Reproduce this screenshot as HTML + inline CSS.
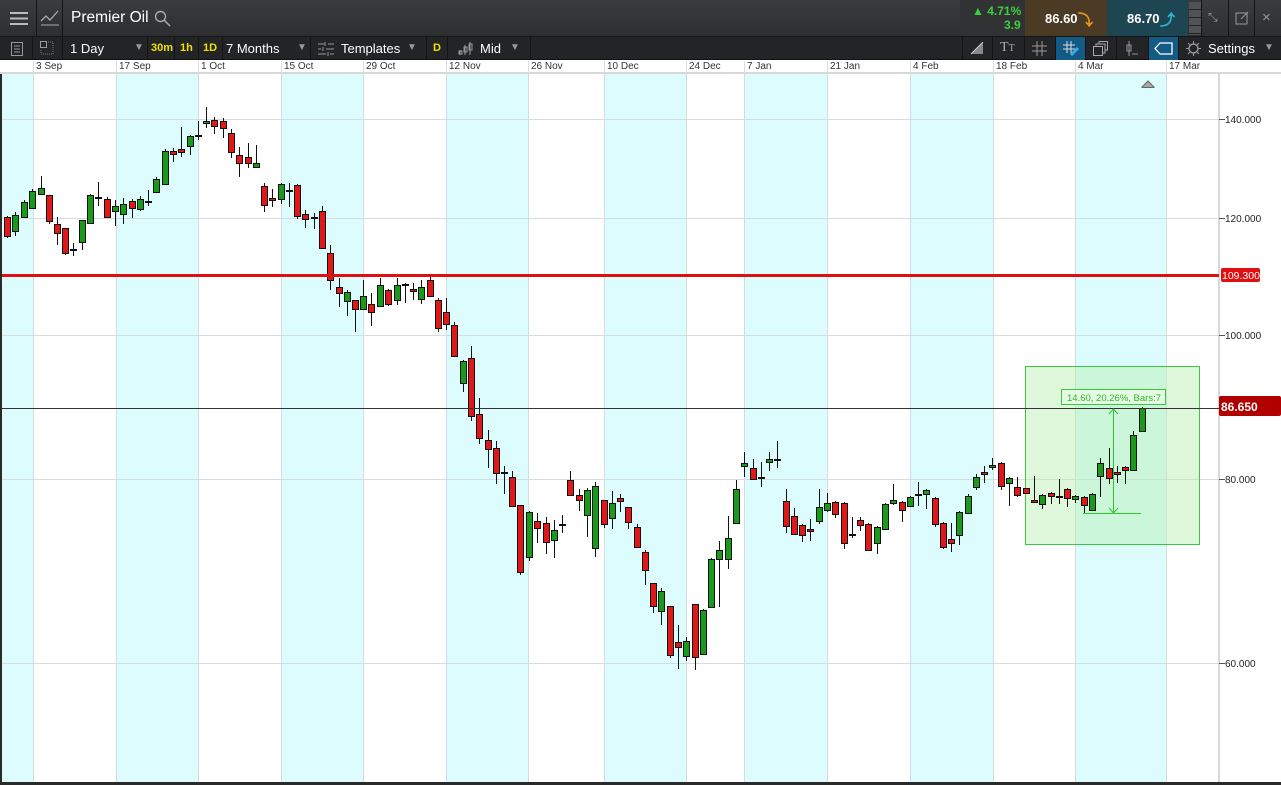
<!DOCTYPE html>
<html><head><meta charset="utf-8">
<style>
*{margin:0;padding:0;box-sizing:border-box}
body{width:1281px;height:785px;overflow:hidden;background:#fff;font-family:"Liberation Sans",sans-serif;position:relative}
.abs{position:absolute}
#top{left:0;top:0;width:1281px;height:37px;background:linear-gradient(#3a3c3e,#2c2e30);border-bottom:1px solid #151617}
#bar2{left:0;top:37px;width:1281px;height:23px;background:#232426;border-bottom:1px solid #111}
.sep{position:absolute;top:0;width:1px;height:100%;background:#141516}
.t{position:absolute;color:#fff;white-space:nowrap}
.y{color:#f0e000;font-weight:bold;font-size:11px}
.dates{left:0;top:60px;width:1219px;height:14px;background:#fff;border-bottom:2px solid #d8d8d8;font-size:10px;color:#333}
.dates span{position:absolute;top:1px;padding-left:2px;border-left:1px solid #ddd;height:12px}
</style></head><body>
<div class="abs" id="top">
  <div class="sep" style="left:36px"></div><div class="sep" style="left:62px"></div>
  <svg class="abs" style="left:10px;top:11px" width="18" height="15"><rect y="1" width="18" height="2" fill="#bbb"/><rect y="6.5" width="18" height="2" fill="#bbb"/><rect y="12" width="18" height="2" fill="#bbb"/></svg>
  <svg class="abs" style="left:40px;top:9px" width="20" height="18"><polyline points="1,12 6,7 10,11 18,2" fill="none" stroke="#aaa" stroke-width="1.3"/><line x1="1" y1="16" x2="19" y2="16" stroke="#aaa"/></svg>
  <div class="t" style="left:71px;top:9px;font-size:15.5px">Premier Oil</div>
  <svg class="abs" style="left:154px;top:10px" width="17" height="17"><circle cx="6.5" cy="6.5" r="5" fill="none" stroke="#aaa" stroke-width="1.4"/><line x1="10" y1="10" x2="16" y2="16" stroke="#aaa" stroke-width="1.5"/></svg>
  <div class="abs" style="left:960px;top:0;width:65px;height:36px;background:#303234"></div>
  <div class="t" style="left:972px;top:4px;font-size:12px;color:#3ccf3c;font-weight:bold">▲ 4.71%</div>
  <div class="t" style="left:1004px;top:18px;font-size:12px;color:#3ccf3c;font-weight:bold">3.9</div>
  <div class="abs" style="left:1025px;top:0;width:82px;height:36px;background:#4c3b24"></div>
  <div class="t" style="left:1045px;top:11px;font-size:13px;font-weight:bold">86.60</div>
  <div class="t" style="left:1078px;top:9px;font-size:15px;color:#e8951a;font-weight:bold">⤵</div>
  <div class="abs" style="left:1107px;top:0;width:81px;height:36px;background:#1e4552"></div>
  <div class="t" style="left:1127px;top:11px;font-size:13px;font-weight:bold">86.70</div>
  <div class="t" style="left:1160px;top:9px;font-size:15px;color:#2bb6d8;font-weight:bold">⤴</div>
  <div class="abs" style="left:1189px;top:2px;width:12px;height:33px;background:repeating-linear-gradient(#505254 0 7px,#222 7px 8px)"></div>
  <div class="sep" style="left:1201px"></div><div class="sep" style="left:1228px"></div><div class="sep" style="left:1254px"></div>
  <div class="t" style="left:1208px;top:10px;font-size:12px;color:#999">⤡</div>
  <svg class="abs" style="left:1235px;top:11px" width="14" height="14"><rect x="1" y="2" width="11" height="11" fill="none" stroke="#999"/><line x1="6" y1="8" x2="13" y2="1" stroke="#999"/></svg>
  <div class="t" style="left:1262px;top:9px;font-size:15px;color:#999">×</div>
</div>
<div class="abs" id="bar2">
  <div class="sep" style="left:32px"></div><div class="sep" style="left:62px"></div><div class="sep" style="left:147px"></div><div class="sep" style="left:174px"></div><div class="sep" style="left:198px"></div><div class="sep" style="left:222px"></div><div class="sep" style="left:310px"></div><div class="sep" style="left:426px"></div><div class="sep" style="left:447px"></div><div class="sep" style="left:530px"></div>
  <div class="sep" style="left:962px"></div><div class="sep" style="left:992px"></div><div class="sep" style="left:1024px"></div><div class="sep" style="left:1055px"></div><div class="sep" style="left:1085px"></div><div class="sep" style="left:1116px"></div><div class="sep" style="left:1148px"></div><div class="sep" style="left:1178px"></div>
  <svg class="abs" style="left:11px;top:5px" width="12" height="14"><rect x=".5" y=".5" width="11" height="13" fill="none" stroke="#999"/><path d="M3 4h6M3 7h6M3 10h6" stroke="#999"/></svg>
  <svg class="abs" style="left:40px;top:4px" width="14" height="14"><rect x=".5" y=".5" width="6" height="6" fill="none" stroke="#999"/><path d="M8 1h5v12H1V8" fill="none" stroke="#777" stroke-dasharray="1 1"/></svg>
  <div class="t" style="left:70px;top:4px;font-size:13px">1 Day</div>
  <div class="t" style="left:134px;top:5px;font-size:10px;color:#999">▼</div>
  <div class="t y" style="left:151px;top:5px">30m</div>
  <div class="t y" style="left:180px;top:5px">1h</div>
  <div class="t y" style="left:203px;top:5px">1D</div>
  <div class="t" style="left:226px;top:4px;font-size:13px">7 Months</div>
  <div class="t" style="left:297px;top:5px;font-size:10px;color:#999">▼</div>
  <svg class="abs" style="left:318px;top:5px" width="16" height="14"><path d="M0 2h6M10 2h6M0 7h3M8 7h8M0 12h8M12 12h4M7 0v4M5 5v4M10 10v4" stroke="#999"/></svg>
  <div class="t" style="left:341px;top:4px;font-size:13px">Templates</div>
  <div class="t" style="left:407px;top:5px;font-size:10px;color:#999">▼</div>
  <div class="t y" style="left:433px;top:5px">D</div>
  <svg class="abs" style="left:458px;top:4px" width="16" height="15"><path d="M2 9v5M7 4v10M12 1v13" stroke="#999"/><rect x="1" y="10" width="3" height="3" fill="none" stroke="#999"/><rect x="6" y="6" width="3" height="5" fill="none" stroke="#999"/><rect x="11" y="3" width="3" height="6" fill="none" stroke="#999"/></svg>
  <div class="t" style="left:480px;top:4px;font-size:13px">Mid</div>
  <div class="t" style="left:510px;top:5px;font-size:10px;color:#999">▼</div>
  <div class="abs" style="left:1056px;top:0;width:29px;height:23px;background:#135a85"></div>
  <div class="abs" style="left:1149px;top:0;width:29px;height:23px;background:#135a85"></div>
  <svg class="abs" style="left:970px;top:4px" width="14" height="14"><path d="M1 13h12V1z" fill="#888"/><path d="M1 13L13 1" stroke="#ccc"/></svg>
  <div class="t" style="left:1000px;top:3px;font-size:14px;color:#aaa;font-family:'Liberation Serif',serif">T<span style="font-size:10px">T</span></div>
  <svg class="abs" style="left:1032px;top:4px" width="15" height="15"><path d="M5 0v15M10 0v15M0 5h15M0 10h15" stroke="#999"/></svg>
  <svg class="abs" style="left:1062px;top:4px" width="17" height="15"><path d="M5 0v12M9 0v12M1 4h12M1 8h12" stroke="#ddd"/><path d="M9 14l7-7" stroke="#3aa7e8" stroke-width="3"/></svg>
  <svg class="abs" style="left:1093px;top:4px" width="15" height="15"><rect x=".5" y="5.5" width="9" height="9" fill="none" stroke="#aaa"/><path d="M3 5V3h9v9h-2M6 3V.5h8.5V9H12" fill="none" stroke="#aaa"/></svg>
  <svg class="abs" style="left:1125px;top:4px" width="14" height="15"><path d="M4 0v15" stroke="#999"/><rect x="2" y="4" width="4" height="6" fill="none" stroke="#999"/><path d="M7 13h6" stroke="#999"/></svg>
  <svg class="abs" style="left:1154px;top:5px" width="19" height="13"><path d="M6 1h12v11H6L1 6.5z" fill="none" stroke="#fff" stroke-width="1.3"/></svg>
  <svg class="abs" style="left:1186px;top:4px" width="15" height="15"><circle cx="7.5" cy="7.5" r="4.5" fill="none" stroke="#999" stroke-width="1.4"/><path d="M7.5 0v3M7.5 12v3M0 7.5h3M12 7.5h3M2 2l2 2M11 11l2 2M2 13l2-2M11 4l2-2" stroke="#999"/></svg>
  <div class="t" style="left:1208px;top:4px;font-size:13px">Settings</div>
  <div class="t" style="left:1264px;top:5px;font-size:10px;color:#999">▼</div>
</div>
<div class="abs dates">
  <span style="left:33px">3 Sep</span><span style="left:116px">17 Sep</span><span style="left:198px">1 Oct</span><span style="left:281px">15 Oct</span><span style="left:363px">29 Oct</span><span style="left:446px">12 Nov</span><span style="left:528px">26 Nov</span><span style="left:604px">10 Dec</span><span style="left:686px">24 Dec</span><span style="left:744px">7 Jan</span><span style="left:827px">21 Jan</span><span style="left:910px">4 Feb</span><span style="left:993px">18 Feb</span><span style="left:1075px">4 Mar</span><span style="left:1166px">17 Mar</span>
</div>
<div class="abs" style="left:1219px;top:60px;width:62px;height:14px;background:#fff;border-bottom:2px solid #d8d8d8"></div>
<svg class="abs" style="left:0;top:74px" width="1281" height="711" id="ch">
<g transform="translate(0,-74)">
 <g fill="#dcfcfe">
  <rect x="2" y="74" width="31" height="708"/><rect x="116" y="74" width="82" height="708"/><rect x="281" y="74" width="82" height="708"/><rect x="446" y="74" width="82" height="708"/><rect x="604" y="74" width="82" height="708"/><rect x="744" y="74" width="83" height="708"/><rect x="910" y="74" width="83" height="708"/><rect x="1075" y="74" width="91" height="708"/>
 </g>
 <g stroke="#d3dde0" stroke-width="1">
  <path d="M33.5 74v708M116.5 74v708M198.5 74v708M281.5 74v708M363.5 74v708M446.5 74v708M528.5 74v708M604.5 74v708M686.5 74v708M744.5 74v708M827.5 74v708M910.5 74v708M993.5 74v708M1075.5 74v708M1166.5 74v708"/>
  <path d="M2 119.5h1217M2 218.5h1217M2 335.5h1217M2 479.5h1217M2 663.5h1217"/>
 </g>
 <rect x="0" y="74" width="2" height="711" fill="#2a2a2a"/>
 <rect x="1218" y="74" width="2" height="708" fill="#d8d8d8"/>
 <path d="M1219 119.5h6M1219 218.5h6M1219 335.5h6M1219 479.5h6M1219 663.5h6" stroke="#555"/>
 <g font-family="Liberation Sans" font-size="10" fill="#222">
  <text x="1225" y="123">140.000</text><text x="1225" y="222">120.000</text><text x="1225" y="339">100.000</text><text x="1225" y="483">80.000</text><text x="1225" y="667">60.000</text>
 </g>
 <path d="M1142 87l6-6 6 6v0.5h-12z" fill="#a8a8a8" stroke="#666"/>
 <rect x="1025.5" y="366.5" width="174" height="178" fill="#b8f0b0" fill-opacity=".45" stroke="#3cc83c"/>
 <g id="cd"></g>
 <rect x="2" y="274" width="1217" height="3" fill="#e01010"/>
 <rect x="1221" y="268" width="39" height="14" rx="2" fill="#e01010"/>
 <text x="1222" y="279" font-family="Liberation Sans" font-size="10.5" fill="#fff">109.300</text>
 <path d="M2 408.5h1217" stroke="#333"/>
 <rect x="1219" y="396" width="62" height="20" rx="2" fill="#b00000"/>
 <text x="1221" y="411" font-family="Liberation Sans" font-size="12" font-weight="bold" fill="#fff">86.650</text>
 <rect x="1061.5" y="389.5" width="104" height="15" fill="#e6fbe4" stroke="#3cc83c"/>
 <text x="1067" y="401" font-family="Liberation Sans" font-size="9.5" fill="#2cb82c">14.60, 20.26%, Bars:7</text>
 <path d="M1113.5 409v104M1109 414l4.5-5 4.5 5M1109 508l4.5 5 4.5-5M1083 513.5h58" stroke="#2cc82c" fill="none"/>
 <rect x="0" y="782" width="1281" height="3" fill="#2a2a2a"/>
</g>
</svg>
<script>
var D=[
[7,217,236,216,238,'r'],[15,215,231,212,236,'g'],[24,202,217,200,218,'g'],[32,191,208,189,209,'g'],[41,188,194,176,194,'g'],[49,195,221,195,224,'r'],[57,224,233,217,245,'r'],[65,228,253,228,255,'r'],[73,249,251,243,256,'d'],[82,220,242,220,250,'g'],[90,195,223,194,224,'g'],[98,197,197,182,206,'d'],[107,199,217,197,218,'r'],[115,206,211,200,226,'g'],[123,204,214,198,224,'g'],[132,201,208,199,218,'r'],[140,199,209,196,211,'g'],[148,201,201,190,206,'d'],[156,179,192,177,193,'g'],[165,151,184,149,185,'g'],[173,151,154,148,162,'r'],[181,149,152,127,157,'r'],[190,136,146,135,155,'g'],[198,135,135,121,140,'d'],[206,121,123,107,128,'g'],[214,120,126,117,134,'r'],[223,121,128,118,138,'r'],[231,133,152,129,158,'r'],[239,155,163,147,177,'r'],[248,157,163,143,168,'r'],[256,163,167,145,167,'g'],[264,186,205,183,212,'r'],[272,198,200,189,207,'r'],[281,184,199,183,204,'g'],[289,190,190,183,207,'d'],[297,185,216,184,219,'r'],[305,214,219,210,228,'r'],[314,217,217,213,229,'d'],[322,211,248,206,249,'r'],[330,253,280,245,290,'r'],[339,287,293,278,307,'r'],[347,292,301,290,316,'g'],[355,300,309,300,332,'r'],[363,296,309,280,310,'g'],[371,304,312,293,326,'r'],[380,285,306,278,307,'g'],[388,290,304,289,306,'r'],[397,285,300,278,305,'g'],[405,284,284,283,303,'d'],[413,289,291,283,300,'r'],[421,287,299,280,304,'g'],[430,280,296,277,297,'r'],[438,300,328,298,332,'r'],[446,312,324,298,330,'r'],[454,325,356,322,357,'r'],
[463,361,383,360,392,'g'],[471,358,416,346,421,'r'],[479,414,438,398,444,'r'],[488,440,449,430,468,'r'],[496,448,473,441,484,'r'],[504,472,472,466,494,'d'],[512,477,506,471,507,'r'],[520,505,572,505,575,'r'],[529,512,557,511,561,'g'],[537,521,528,513,543,'r'],[546,523,542,517,554,'r'],[554,530,540,520,558,'g'],[562,524,524,515,533,'d'],[570,480,495,471,496,'r'],[579,495,500,489,511,'r'],[587,490,515,488,537,'g'],[595,486,548,482,557,'g'],[604,500,524,500,528,'r'],[612,503,518,491,529,'g'],[620,498,501,494,512,'r'],[628,507,522,507,529,'r'],[637,527,547,524,548,'r'],[645,552,570,550,585,'r'],[653,583,606,583,613,'r'],[661,591,611,588,625,'g'],[670,606,655,606,658,'r'],[678,642,647,625,669,'r'],[686,641,656,637,661,'g'],[695,604,657,604,670,'r'],[703,610,654,609,655,'g'],[711,559,607,558,608,'g'],[719,550,559,541,607,'g'],[728,538,559,516,569,'g'],[736,489,523,480,524,'g'],[744,463,466,452,477,'g'],[753,468,479,459,480,'r'],[761,477,477,462,487,'d'],[769,459,462,452,471,'g'],[777,459,459,441,468,'d'],
[786,501,526,489,533,'r'],[794,516,534,508,535,'r'],[802,525,535,524,542,'r'],[810,529,531,519,541,'r'],[819,507,521,489,524,'g'],[827,503,510,493,512,'g'],[835,502,514,501,518,'r'],[844,503,543,502,549,'r'],[852,534,534,517,538,'d'],[860,520,525,517,531,'r'],[868,524,550,523,551,'r'],[877,527,543,526,554,'g'],[885,504,529,503,530,'g'],[893,500,503,484,505,'g'],[902,502,510,501,522,'r'],[910,497,506,496,507,'g'],[918,494,494,482,506,'d'],[926,490,494,489,509,'g'],[935,498,524,497,527,'r'],[943,523,547,522,549,'r'],[951,539,543,523,552,'r'],[959,512,535,511,545,'g'],[968,496,513,494,514,'g'],[976,477,487,474,490,'g'],[984,472,474,466,483,'r'],[992,465,467,458,470,'g'],[1001,463,486,462,490,'r'],[1009,478,483,477,506,'g'],[1017,487,495,477,497,'r'],[1026,488,493,488,494,'r'],[1034,500,502,476,503,'r'],[1042,495,504,494,509,'g'],[1051,493,496,492,504,'r'],[1059,496,496,479,504,'d'],[1067,489,498,488,507,'r'],[1075,496,499,495,503,'g'],[1084,497,505,496,513,'r'],[1092,494,510,493,510,'g'],[1100,463,476,458,497,'g'],[1109,468,478,448,484,'r'],[1117,472,474,466,483,'r'],[1125,467,470,466,484,'r'],[1133,435,470,431,471,'g'],[1142,408,431,407,432,'g']];
var s='';
D.forEach(function(c){var x=c[0],col=c[5]=='g'?'#1a9a1a':c[5]=='r'?'#e01818':'#111';
s+='<line x1="'+(x+.5)+'" x2="'+(x+.5)+'" y1="'+c[3]+'" y2="'+c[4]+'" stroke="#111"/>';
if(c[5]=='d'){s+='<rect x="'+(x-3)+'" y="'+c[1]+'" width="7" height="2" fill="#111"/>';}
else{var h=Math.max(c[2]-c[1],2);s+='<rect x="'+(x-2.5)+'" y="'+(c[1]+.5)+'" width="6" height="'+h+'" fill="'+col+'" stroke="#111"/>';}});
document.getElementById('cd').innerHTML=s;
</script>
</body></html>
